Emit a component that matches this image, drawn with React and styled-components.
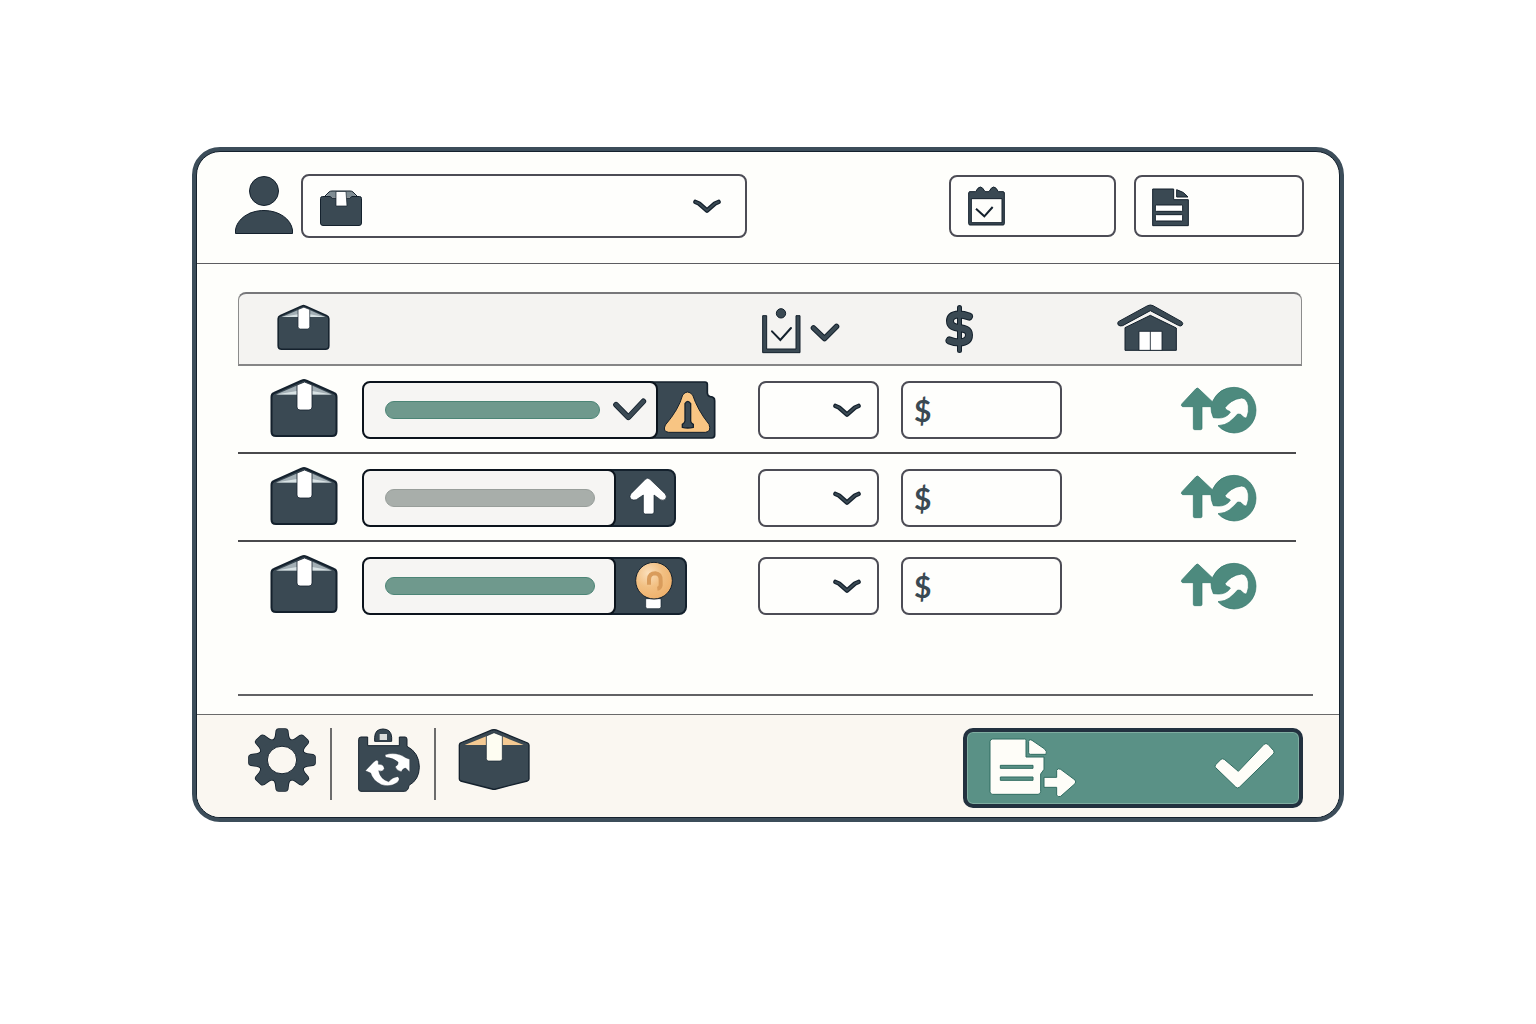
import styled, { createGlobalStyle } from "styled-components";

const SLATE = "#3a4953";
const INK = "#14212d";
const GREEN = "#4d8a7e";

const rows = [
    { id: 1, width: 296, color: "green", check: true, tag: "warning" },
    { id: 2, width: 254, color: "gray", check: false, tag: "up" },
    { id: 3, width: 254, color: "green", check: false, tag: "hint" },
];

function App() {
    return (
        <Page>
            <GlobalStyle />
            <Card>
                <CardInner>
                    <Header>
                        <UserIcon />
                        <CustomerSelect>
                            <BoxIcon />
                            <Select aria-label="Customer" />
                            <Chevron />
                        </CustomerSelect>
                        <HeaderFields>
                            <IconField $width={167}>
                                <CalendarIcon />
                                <FieldInput type="text" aria-label="Date" />
                            </IconField>
                            <IconField $width={170}>
                                <DocumentIcon />
                                <FieldInput type="text" aria-label="Document" />
                            </IconField>
                        </HeaderFields>
                    </Header>

                    <Body>
                        <Table>
                            <colgroup>
                                <Col $width={124} />
                                <col />
                                <Col $width={143} />
                                <Col $width={216} />
                                <Col $width={185} />
                            </colgroup>
                            <thead>
                                <tr>
                                    <HeadCell $indent={38}>
                                        <PackageIcon width={53} height={50} />
                                    </HeadCell>
                                    <HeadCell />
                                    <HeadCell $indent={4}>
                                        <HeadGroup>
                                            <ClipboardIcon />
                                            <BoldChevron />
                                        </HeadGroup>
                                    </HeadCell>
                                    <HeadCell $indent={44}>
                                        <DollarIcon />
                                    </HeadCell>
                                    <HeadCell>
                                        <HouseIcon />
                                    </HeadCell>
                                </tr>
                            </thead>
                            <tbody>
                                {rows.map((row) => (
                                    <ItemRow key={row.id} row={row} />
                                ))}
                            </tbody>
                        </Table>
                        <Divider />
                    </Body>

                    <Footer>
                        <Tools>
                            <IconButton aria-label="Settings">
                                <GearIcon />
                            </IconButton>
                            <Separator />
                            <IconButton aria-label="Sync">
                                <SyncIcon />
                            </IconButton>
                            <Separator />
                            <IconButton aria-label="Package">
                                <OpenBoxIcon />
                            </IconButton>
                        </Tools>
                        <SubmitButton aria-label="Submit">
                            <ExportIcon />
                            <CheckIcon />
                        </SubmitButton>
                    </Footer>
                </CardInner>
            </Card>
        </Page>
    );
}

function ItemRow({ row }) {
    return (
        <Row>
            <Cell $indent={32}>
                <PackageIcon width={68} height={64} />
            </Cell>
            <Cell>
                <Item>
                    <ItemName $width={row.width} $check={row.check} aria-label="Item">
                        <Bar $color={row.color} />
                        {row.check && <SmallCheckIcon />}
                    </ItemName>
                    {row.tag === "warning" && (
                        <WarningButton aria-label="Warning">
                            <WarningTag />
                        </WarningButton>
                    )}
                    {row.tag === "up" && (
                        <TagButton $width={70} aria-label="Move up">
                            <UpIcon />
                        </TagButton>
                    )}
                    {row.tag === "hint" && (
                        <TagButton $width={81} aria-label="Hint">
                            <BulbIcon />
                        </TagButton>
                    )}
                </Item>
            </Cell>
            <Cell>
                <UnitSelect>
                    <Select aria-label="Unit" />
                    <Chevron />
                </UnitSelect>
            </Cell>
            <Cell>
                <PriceField>
                    <span>$</span>
                    <FieldInput type="text" aria-label="Price" />
                </PriceField>
            </Cell>
            <Cell $indent={63}>
                <IconButton aria-label="Restock">
                    <RestockIcon />
                </IconButton>
            </Cell>
        </Row>
    );
}

/* icons */

function UserIcon() {
    return (
        <Icon width="60" height="60" viewBox="0 0 60 60" fill={SLATE} stroke={INK}>
            <circle cx="30" cy="15" r="14.500" />
            <path d="M1.500 57.500V54C3 43 15 34.500 30 34.500S57 43 58.500 54V57.500z" />
        </Icon>
    );
}

function BoxIcon() {
    return (
        <Icon width="42" height="40" viewBox="0 -4 42 40">
            <path d="M5 7L9 2Q10 1 12 1H30Q32 1 33 2L37 7z" fill="#7f8c93" />
            <path d="M5 6L9 2Q10 1 12 1H30Q32 1 33 2L37 6" fill="none" stroke={INK} />
            <path
                d="M2.500 6.500H10L12 8H30L32 6.500H39.500Q41.500 6.500 41.500 8.500V33Q41.500 35.500 39 35.500H3Q.5 35.500 .5 33V8.500Q.5 6.500 2.500 6.500z"
                fill={SLATE}
                stroke={INK}
            />
            <path d="M16 1.500H26L27 16H16z" fill="#fff" stroke={INK} strokeWidth=".7" />
        </Icon>
    );
}

function Chevron() {
    return (
        <Icon width="28" height="17" viewBox="0 0 28 17" fill="none" strokeLinecap="round" strokeLinejoin="round">
            <path d="M2.500 4L6 5.500L14 12.500L22 5.500L25.500 4" stroke={INK} strokeWidth="4.600" />
            <path d="M2.500 4L6 5.500L14 12.500L22 5.500L25.500 4" stroke={SLATE} strokeWidth="2.200" />
        </Icon>
    );
}

function BoldChevron() {
    return (
        <Icon width="30" height="24" viewBox="0 -4 30 24" fill="none" strokeLinecap="round" strokeLinejoin="round">
            <path d="M3.500 5L14.500 15.500L26.500 3.500" stroke={INK} strokeWidth="5.600" />
            <path d="M3.500 5L14.500 15.500L26.500 3.500" stroke={SLATE} strokeWidth="3.600" />
        </Icon>
    );
}

function CalendarIcon() {
    return (
        <Icon width="38" height="40" viewBox="113 77 114 120">
            <path
                d="M120 94H139Q146 80 153 80T167 94H179Q186 80 193 80T207 94H221Q225 94 225 98V190Q225 194 221 194H122Q118 194 118 190V98z"
                fill={SLATE}
                stroke={INK}
                strokeWidth="3"
            />
            <path d="M126 115H218V187H126z" fill="#fefefb" stroke={INK} strokeWidth="3" />
            <path d="M140 145L165 168L190 140" fill="none" stroke={INK} strokeWidth="6" />
        </Icon>
    );
}

function DocumentIcon() {
    return (
        <Icon width="37" height="41" viewBox="667 79 111 123" stroke={INK} strokeWidth="3">
            <path d="M669 88H732V120H776V198H669z" fill={SLATE} />
            <path d="M741 90Q764 96 775 112H741z" fill={SLATE} />
            <rect x="677" y="136" width="82" height="19" rx="3" fill="#fff" />
            <rect x="677" y="165" width="82" height="19" rx="3" fill="#fff" />
        </Icon>
    );
}

function PackageIcon({ width, height }) {
    return (
        <Icon width={width} height={height} viewBox="0 0 68 64">
            <path
                d="M4 15L32 2.500Q34 1.500 36 2.500L64 15Q66.500 16 66.500 19V53.500Q66.500 58 62 58H6Q1.500 58 1.500 53.500V19Q1.500 16 4 15z"
                fill={SLATE}
                stroke={INK}
                strokeWidth="2"
            />
            <path d="M6 16.500L27 7.500V16.500zM62 16.500L42 7.500V16.500z" fill="#a3afb5" />
            <path d="M6 16.500L27 13V16.500zM62 16.500L42 13V16.500z" fill="#d9e3e5" />
            <path d="M27 7L34.500 4L42 7V29Q42 32 39 32H30Q27 32 27 29z" fill="#fff" stroke={INK} strokeWidth=".8" />
        </Icon>
    );
}

function ClipboardIcon() {
    return (
        <Icon width="39" height="48" viewBox="96 66 117 144">
            <path d="M98 92H110V192H198V92H210V203H98z" fill={SLATE} stroke={INK} strokeWidth="3" />
            <circle cx="153" cy="85" r="14" fill={SLATE} stroke={INK} strokeWidth="3" />
            <path d="M126 139L151 165L183 129" fill="none" stroke={INK} strokeWidth="6" strokeLinecap="round" />
        </Icon>
    );
}

function DollarIcon() {
    return (
        <Icon width="29" height="48" viewBox="0 0 29 48" fill="none" strokeLinecap="round" strokeLinejoin="round">
            <path d="M14.500 2.500V45.500" stroke={INK} strokeWidth="5" />
            <path
                d="M24 11.500Q19 9.500 13.500 9.500Q5 10 5 16C5 27 24 19 24 30Q24 37 14.500 37.500Q9 37.500 4.500 35.500"
                stroke={INK}
                strokeWidth="8"
            />
            <path
                d="M24 11.500Q19 9.500 13.500 9.500Q5 10 5 16C5 27 24 19 24 30Q24 37 14.500 37.500Q9 37.500 4.500 35.500"
                stroke={SLATE}
                strokeWidth="6"
            />
            <path d="M14.500 2.500V45.500" stroke={SLATE} strokeWidth="3" />
        </Icon>
    );
}

function HouseIcon() {
    return (
        <Icon width="68" height="50" viewBox="80 42 204 150" stroke={INK} strokeWidth="3">
            <path
                d="M84 95L172 47Q180 43 188 47L274 95Q280 101 275 106Q270 110 264 106L180 62L97 107Q88 110 83 104Q81 99 84 95z"
                fill={SLATE}
                strokeLinejoin="round"
            />
            <path d="M104 113L180 76L258 114V181H104z" fill={SLATE} strokeLinejoin="round" />
            <path d="M146 124H215V181H146zM180 124V181" fill="#fff" strokeWidth="2.500" />
        </Icon>
    );
}

function SmallCheckIcon() {
    return (
        <Icon width="34" height="26" viewBox="100 78 102 78" fill="none" strokeLinecap="round" strokeLinejoin="round">
            <path d="M109 101L146 139L191 91" stroke={INK} strokeWidth="17" />
            <path d="M109 101L146 139L191 91" stroke={SLATE} strokeWidth="12" />
        </Icon>
    );
}

// the dark plate belongs to the drawing because of its cut corner
function WarningTag() {
    return (
        <Icon width="68" height="58" viewBox="204 30 204 174" stroke={INK}>
            <path
                d="M204 33H375Q382 33 382 40V66Q383 76 391 77Q404 78 404 89V192Q404 201 395 201H204z"
                fill={SLATE}
                strokeWidth="5"
            />
            <path
                d="M308 72Q322 54 338 72Q352 116 387 160Q395 182 376 184H266Q247 182 256 162Q296 116 308 72z"
                fill="#f8c583"
                strokeWidth="3"
            />
            <path d="M315 98Q323 84 332 98V150Q332 156 340 160V169Q323 173 307 169V160Q314 156 315 150z" fill={SLATE} strokeWidth="4" />
        </Icon>
    );
}

function UpIcon() {
    return (
        <Icon width="38" height="42" viewBox="144 52 114 126">
            <path
                d="M193 59Q200 52 207 59L253 103Q260 112 252 120Q245 123 238 120L219 106V157Q219 163 213 163H193Q187 163 187 157V106L166 120Q157 123 149 118Q144 110 150 102z"
                fill="#fff"
                stroke={INK}
                strokeWidth="2"
            />
        </Icon>
    );
}

function BulbIcon() {
    return (
        <Icon width="38" height="50" viewBox="165 303 114 150">
            <defs>
                <radialGradient id="bulb" cx=".35" cy=".3" r=".75">
                    <stop offset="0" stopColor="#fbe0bd" />
                    <stop offset=".5" stopColor="#f2c083" />
                    <stop offset="1" stopColor="#eeb06b" />
                </radialGradient>
            </defs>
            <path d="M197 416H243V440Q243 446 237 446H203Q197 446 197 440z" fill="#fff" stroke={INK} strokeWidth="2" />
            <circle cx="222" cy="362" r="55" fill="url(#bulb)" stroke={INK} strokeWidth="3" />
            <path d="M207 374V358Q208 340 226 340Q243 342 242 362V376Q240 385 232 386" fill="none" stroke="#d99c5c" strokeWidth="12" />
        </Icon>
    );
}

function RestockIcon() {
    return (
        <Icon width="77" height="48" viewBox="270 285 231 144">
            <path
                d="M317 294Q322 288 327 294L367 332Q388 289 432 289A66 68.500 0 0 1 432 426Q402 424 384 404Q405 403 418 393Q432 382 443 369L452 370L460 378Q466 384 471 378Q477 362 475 345Q471 322 455 321Q437 323 424 332Q413 339 405 350Q406 356 414 359Q420 360 421 364Q408 382 385 381L370 380Q362 362 363 347H336V412Q336 416 332 416H314Q310 416 310 412V347H278Q271 344 276 338z"
                fill={GREEN}
                stroke="#2f7468"
                strokeWidth="2"
            />
        </Icon>
    );
}

function GearIcon() {
    const tooth = "M-27 -62Q-20 -68 -19 -76L-17 -93Q-15 -99 -10 -99H10Q15 -99 17 -93L19 -76Q20 -68 27 -62z";
    const angles = [0, 45, 90, 135, 180, 225, 270, 315];
    return (
        <Icon width="68" height="64" viewBox="-102 -102 204 204" preserveAspectRatio="none">
            <g stroke={INK} strokeWidth="5" fill={INK}>
                {angles.map((a) => (
                    <path key={a} d={tooth} transform={`rotate(${a})`} />
                ))}
                <circle r="68" />
            </g>
            <g fill={SLATE}>
                {angles.map((a) => (
                    <path key={a} d={tooth} transform={`rotate(${a})`} />
                ))}
                <circle r="68" />
            </g>
            <circle r="44" fill="#faf7f1" stroke={INK} strokeWidth="3" />
        </Icon>
    );
}

function SyncIcon() {
    return (
        <Icon width="66" height="64" viewBox="493 142 198 192" stroke={INK} strokeWidth="3">
            <path
                d="M514 169H534V195H629V169H646Q652 169 652 176V197Q689 216 689 260Q688 298 658 314Q656 331 645 332H514Q507 332 507 325V176Q507 169 514 169z"
                fill={SLATE}
                strokeLinejoin="round"
            />
            <path d="M555 182V170Q556 145 580 145Q604 145 606 170V182z" fill={SLATE} />
            <path d="M570 178V160H592V178z" fill="#dcdedc" stroke="none" />
            <path
                d="M586 222Q620 212 648 231L660 236V274L648 262Q640 262 635 273Q620 270 617 258Q628 252 625 244Q612 232 588 230z"
                fill="#fff"
                strokeWidth="1"
            />
            <path
                d="M527 270L553 243Q560 235 566 241V251Q582 250 584 264Q578 275 567 270Q572 296 597 303Q608 289 624 288Q634 294 622 306Q602 320 575 312Q549 299 543 277z"
                fill="#fff"
                strokeWidth="1"
            />
        </Icon>
    );
}

function OpenBoxIcon() {
    return (
        <Icon width="72" height="64" viewBox="804 142 216 192">
            <path
                d="M811 187L906 148Q912 146 918 148L1013 187Q1017 190 1017 194V295Q1017 299 1012 301L918 325Q912 327 906 325L812 301Q808 299 808 295V194Q808 190 811 187z"
                fill={SLATE}
                stroke={INK}
                strokeWidth="4"
            />
            <path d="M824 193L889 167V193zM1001 193L937 167V193z" fill="#f5ca93" />
            <path d="M889 166L912 156L937 166V234Q937 241 930 241H896Q889 241 889 234z" fill="#fefdf2" stroke={INK} strokeWidth="2" />
        </Icon>
    );
}

function ExportIcon() {
    return (
        <Icon width="88" height="60" viewBox="119 174 264 180" fill="#fefdf8" stroke="#2f6b60" strokeWidth="3">
            <path d="M130 177H226Q230 177 230 181V231H284V268L274 282V335Q274 343 266 343H130Q122 343 122 335V185Q122 177 130 177z" />
            <path d="M238 184Q240 176 248 181L286 207Q294 215 290 223H243Q238 223 238 218z" />
            <path d="M284 292H322V271Q325 263 334 268L377 300Q381 306 377 311L334 349Q325 353 322 345V322H284z" />
            <path d="M153 256H251V265H153zM153 291H251V301H153z" fill="#5a9186" />
        </Icon>
    );
}

function CheckIcon() {
    return (
        <Icon width="62" height="52" viewBox="792 186 186 156">
            <path
                d="M797 254L813 238Q818 234 824 239L865 274L942 193Q948 188 954 193L971 212Q974 217 970 222L869 321Q863 327 857 321L797 263Q793 259 797 254z"
                fill="#fefdf8"
                stroke="#2f6b60"
                strokeWidth="3"
            />
        </Icon>
    );
}

/* styles */

const GlobalStyle = createGlobalStyle`
    * {
        box-sizing: border-box;
    }

    body {
        margin: 0;
        background-color: #fff;
        font-family: Lato, sans-serif;
    }

    button,
    input,
    select {
        font: inherit;
        color: inherit;
    }
`;

const Page = styled.main`
    min-height: 100vh;
    padding: 147px 0 40px;
    color: ${SLATE};
`;

const Card = styled.div`
    width: 75%;
    min-width: 1080px;
    margin: 0 auto;
    border: 4px solid #3c4d5a;
    border-radius: 28px;
    background-color: #3c4d5a;
`;

const CardInner = styled.div`
    border: 1px solid #14212d;
    border-radius: 24px;
    background-color: #fefefb;
    overflow: hidden;
`;

const Icon = styled.svg`
    display: block;
    flex-shrink: 0;
`;

const Header = styled.header`
    display: flex;
    align-items: center;
    gap: 7px;
    padding: 22px 35px 25px 37px;
    border-bottom: 1px solid #5d5d60;
`;

const Field = styled.label`
    display: flex;
    align-items: center;
    border: 2px solid #4c4c55;
    border-radius: 8px;
    background-color: #fefefc;
`;

const CustomerSelect = styled(Field)`
    flex: 0 1 446px;
    height: 64px;
    padding: 0 24px 0 17px;
`;

const Select = styled.select`
    flex: 1;
    min-width: 0;
    height: 100%;
    border: 0;
    background: transparent;
    appearance: none;
    outline: none;
`;

const HeaderFields = styled.div`
    display: flex;
    gap: 18px;
    margin-left: auto;
`;

const IconField = styled(Field)`
    width: ${({ $width }) => $width}px;
    height: 62px;
    gap: 8px;
    padding: 0 16px;
`;

const FieldInput = styled.input`
    flex: 1;
    min-width: 0;
    border: 0;
    background: transparent;
    outline: none;
`;

const Body = styled.section`
    padding: 28px 26px 18px 41px;
`;

const Table = styled.table`
    width: calc(100% - 11px);
    table-layout: fixed;
    border-spacing: 0;
`;

const Col = styled.col`
    width: ${({ $width }) => $width}px;
`;

const HeadCell = styled.th`
    height: 74px;
    padding: 0 0 0 ${({ $indent }) => $indent || 0}px;
    border-top: 2px solid #77777a;
    border-bottom: 2px solid #858586;
    background-color: #f4f3f1;

    &:first-child {
        border-left: 1px solid #8c8c8c;
        border-top-left-radius: 8px;
    }

    &:last-child {
        border-right: 1px solid #8c8c8c;
        border-top-right-radius: 8px;
    }
`;

const HeadGroup = styled.div`
    display: flex;
    align-items: center;
    gap: 9px;
    padding-top: 4px;
`;

const Row = styled.tr`
    &:not(:last-child) {
        background: linear-gradient(#4a4a4c, #4a4a4c) left bottom / calc(100% - 6px) 2px no-repeat;
    }
`;

const Cell = styled.td`
    height: 88px;
    padding: 0 0 0 ${({ $indent }) => $indent || 0}px;
`;

const Item = styled.div`
    display: flex;
    height: 58px;
`;

const ItemName = styled.button`
    position: relative;
    z-index: 1;
    display: flex;
    align-items: center;
    gap: 13px;
    width: ${({ $width }) => $width}px;
    padding: 0 ${({ $check }) => ($check ? 9 : 19)}px 0 21px;
    border: 2px solid #0b131c;
    border-radius: 8px;
    background-color: #f6f5f3;
    cursor: pointer;
`;

const Bar = styled.span`
    flex: 1;
    height: 18px;
    border: 1px solid ${({ $color }) => ($color === "green" ? "#4c8576" : "#989e9a")};
    border-radius: 9px;
    background-color: ${({ $color }) => ($color === "green" ? "#6f998d" : "#a8aeaa")};
`;

const TagButton = styled.button`
    display: flex;
    align-items: center;
    justify-content: center;
    width: ${({ $width }) => $width}px;
    margin-left: -10px;
    padding: 0 0 0 14px;
    border: 2px solid #14212d;
    border-radius: 0 8px 8px 0;
    background-color: ${SLATE};
    cursor: pointer;
`;

const WarningButton = styled.button`
    margin-left: -10px;
    padding: 0;
    border: 0;
    background: transparent;
    cursor: pointer;
`;

const UnitSelect = styled(Field)`
    width: 121px;
    height: 58px;
    padding: 0 16px 0 8px;
`;

const PriceField = styled(Field)`
    width: 161px;
    height: 58px;
    gap: 8px;
    padding: 0 12px 0 11px;
    font-size: 30px;
    font-weight: 700;
    line-height: 40px;
`;

const IconButton = styled.button`
    display: block;
    padding: 0;
    border: 0;
    background: transparent;
    cursor: pointer;
`;

const Divider = styled.hr`
    height: 2px;
    margin: 64px 0 0;
    border: 0;
    background-color: #626264;
`;

const Footer = styled.footer`
    display: flex;
    align-items: flex-start;
    padding: 13px 36px 9px 51px;
    border-top: 1px solid #6a6a6a;
    background-color: #faf7f1;
`;

const Tools = styled.div`
    display: flex;
    align-items: flex-start;
`;

const Separator = styled.div`
    width: 2px;
    height: 72px;
    margin: 0 22px 0 14px;
    background-color: #6c6c6c;
`;

const SubmitButton = styled.button`
    display: flex;
    align-items: center;
    justify-content: space-between;
    width: 340px;
    height: 80px;
    margin-left: auto;
    padding: 0 23px 0 22px;
    border: 4px solid #22313f;
    border-radius: 10px;
    background-color: #5a9186;
    box-shadow: inset 0 0 0 1px #7fada1;
    cursor: pointer;
`;

export default App;
